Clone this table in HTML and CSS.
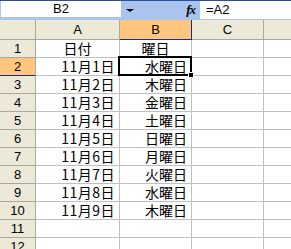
FILE: index.html
```html
<!DOCTYPE html>
<html lang="ja">
<head>
    <meta charset="UTF-8">
    <title>Sheet1</title>
    <link rel="stylesheet" href="styles.css">
</head>
<body>
    <div class="formula-bar">
        <div class="name-box">B2</div>
        <div class="name-drop"><span class="arrow"></span></div>
        <div class="fx">fx</div>
        <div class="formula">=A2</div>
    </div>
    <div class="sheet" id="sheet">
        <div class="corner"></div>
        <div class="col-head">A</div>
        <div class="col-head active">B</div>
        <div class="col-head">C</div>
        <div class="col-head last"></div>
    </div>

    <script>
        const sheet = document.getElementById('sheet');
        const days = ['水', '木', '金', '土', '日', '月', '火', '水', '木'];
        const rows = [['日付', '曜日', true]];
        days.forEach((d, i) => rows.push(['11月' + (i + 1) + '日', d + '曜日', false]));
        rows.push(['', '', false], ['', '', false]);

        rows.forEach((r, i) => {
            const n = i + 1;
            const head = document.createElement('div');
            head.className = 'row-head' + (n === 2 ? ' active' : '');
            head.textContent = n;
            sheet.appendChild(head);

            const a = document.createElement('div');
            a.className = 'cell' + (r[2] ? ' center' : ' right date');
            a.textContent = r[0];
            sheet.appendChild(a);

            const b = document.createElement('div');
            b.className = 'cell' + (r[2] ? ' center' : ' right') + (n === 2 ? ' selected' : '');
            b.textContent = r[1];
            sheet.appendChild(b);

            sheet.appendChild(Object.assign(document.createElement('div'), { className: 'cell' }));
            sheet.appendChild(Object.assign(document.createElement('div'), { className: 'cell last' }));
        });
    </script>
</body>
</html>
```

FILE: styles.css
```css
body {
    margin: 0;
    background: #fff;
    font-family: "Noto Sans CJK JP", "Liberation Sans", sans-serif;
    overflow: hidden;
}
.formula-bar {
    display: flex;
    height: 19px;
    border-top: 1px solid #2b4f9e;
    background-color: #a9c5ee;
    box-sizing: border-box;
}
.name-box {
    width: 120px;
    margin: 0 0 2px 1px;
    background: #fff;
    font-family: "Liberation Sans", sans-serif;
    font-size: 13px;
    line-height: 16px;
    text-align: center;
    color: #000;
}
.name-drop {
    width: 18px;
    display: flex;
    justify-content: center;
    align-items: center;
}
.arrow {
    width: 0;
    height: 0;
    border-left: 4px solid transparent;
    border-right: 4px solid transparent;
    border-top: 3px solid #000;
}
.fx {
    width: 61px;
    text-align: right;
    padding-right: 5px;
    box-sizing: border-box;
    font-family: "Liberation Serif", serif;
    font-style: italic;
    font-weight: bold;
    font-size: 13px;
    line-height: 17px;
    letter-spacing: -1px;
}
.formula {
    flex: 1;
    background: #fff;
    font-family: "Liberation Sans", sans-serif;
    font-size: 13px;
    line-height: 18px;
    padding-left: 6px;
}
.sheet {
    display: grid;
    grid-template-columns: 36px 84px 72px 72px 1fr;
    grid-template-rows: 20px;
    grid-auto-rows: 18px;
    border-top: 1px solid #a9c5ee;
}
.corner, .col-head, .row-head {
    background-color: #ece9d8;
    border-right: 1px solid #aca899;
    border-bottom: 1px solid #aca899;
    box-sizing: border-box;
    color: #000;
}
.col-head {
    text-align: center;
    font-family: "Liberation Sans", sans-serif;
    font-size: 13px;
    line-height: 19px;
}
.row-head {
    text-align: center;
    font-family: "Liberation Sans", sans-serif;
    font-size: 13px;
    line-height: 17px;
}
.col-head.active, .row-head.active {
    background-color: #ffc67f;
}
.col-head.active {
    border-right-color: #1c2a8a;
    border-bottom-color: #1c2a8a;
}
.row-head.active {
    border-bottom-color: #1c2a8a;
}
.col-head.last, .cell.last {
    border-right: none;
}
.cell {
    border-right: 1px solid #c0c0c0;
    border-bottom: 1px solid #c0c0c0;
    box-sizing: border-box;
    font-size: 14px;
    line-height: 17px;
    color: #000;
    white-space: nowrap;
}
.cell.right {
    text-align: right;
    padding-right: 4px;
}
.cell.date {
    letter-spacing: 0.5px;
}
.cell.center {
    text-align: center;
}
.cell.selected {
    position: relative;
}
/* thick frame around the active cell, with the fill handle */
.cell.selected::before {
    content: "";
    position: absolute;
    left: -2px;
    top: -2px;
    right: -1px;
    bottom: -1px;
    border: 2px solid #000;
}
.cell.selected::after {
    content: "";
    position: absolute;
    right: -3px;
    bottom: -3px;
    width: 4px;
    height: 4px;
    background: #000;
    border: 1px solid #fff;
}
```
